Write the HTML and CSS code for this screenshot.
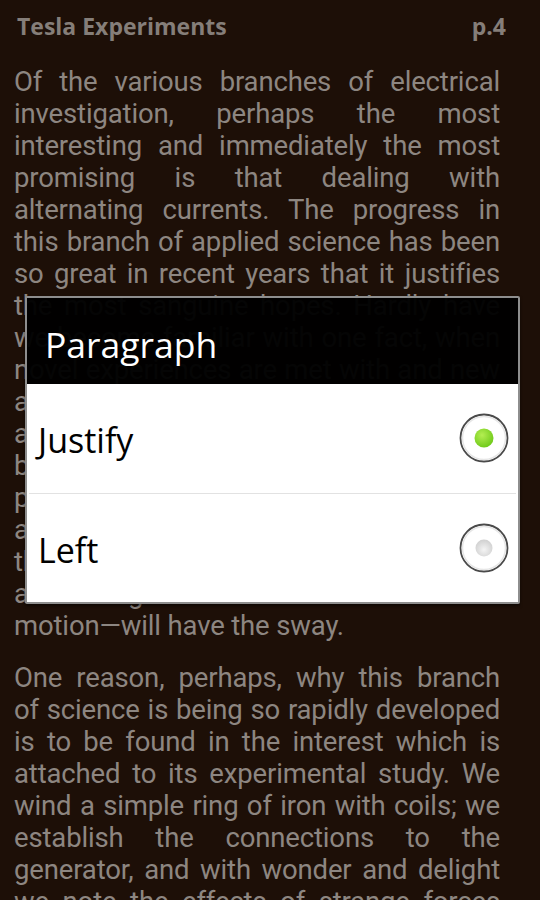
FILE: index.html
```html
<!DOCTYPE html>
<html>
<head>
<meta charset="utf-8">
<link rel="stylesheet" href="styles.css">
</head>
<body>
<div class="screen">
  <header class="bar">
    <span class="book">Tesla Experiments</span>
    <span class="page">p.4</span>
  </header>
  <main class="reader">
    <p class="para">
      <span class="ln">Of the various branches of electrical</span>
      <span class="ln">investigation, perhaps the most</span>
      <span class="ln">interesting and immediately the most</span>
      <span class="ln">promising is that dealing with</span>
      <span class="ln">alternating currents. The progress in</span>
      <span class="ln">this branch of applied science has been</span>
      <span class="ln">so great in recent years that it justifies</span>
      <span class="ln">the most sanguine hopes. Hardly have</span>
      <span class="ln">we become familiar with one fact, when</span>
      <span class="ln">novel experiences are met with and new</span>
      <span class="ln">avenues of research are opened. Even</span>
      <span class="ln">at this hour possibilities not dreamed of</span>
      <span class="ln">before are, by the use of these currents,</span>
      <span class="ln">partly realized. As in nature all is ebb</span>
      <span class="ln">and tide, all is wave motion, so it seems</span>
      <span class="ln">that in all branches of industry</span>
      <span class="ln">alternating currents—electric wave</span>
      <span class="ln last">motion—will have the sway.</span>
    </p>
    <p class="para">
      <span class="ln">One reason, perhaps, why this branch</span>
      <span class="ln">of science is being so rapidly developed</span>
      <span class="ln">is to be found in the interest which is</span>
      <span class="ln">attached to its experimental study. We</span>
      <span class="ln">wind a simple ring of iron with coils; we</span>
      <span class="ln">establish the connections to the</span>
      <span class="ln">generator, and with wonder and delight</span>
      <span class="ln">we note the effects of strange forces</span>
    </p>
  </main>

  <div class="dialog">
    <div class="dialog-title">Paragraph</div>
    <ul class="options">
      <li class="option">
        <span class="opt-label">Justify</span>
        <svg class="radio" width="50" height="50" viewBox="0 0 50 50">
          <defs>
            <radialGradient id="g1" cx="0.4" cy="0.35" r="0.7">
              <stop offset="0" stop-color="#b4ee52"/>
              <stop offset="1" stop-color="#6cc817"/>
            </radialGradient>
          </defs>
          <circle cx="25" cy="25" r="23.5" fill="#fff" stroke="#4a4a4a" stroke-width="1.8"/>
          <circle cx="25" cy="25" r="21.5" fill="none" stroke="#e6e6e6" stroke-width="1.5"/>
          <circle cx="25" cy="25" r="9.5" fill="url(#g1)"/>
        </svg>
      </li>
      <li class="option">
        <span class="opt-label">Left</span>
        <svg class="radio" width="50" height="50" viewBox="0 0 50 50">
          <defs>
            <radialGradient id="g2" cx="0.5" cy="0.6" r="0.6">
              <stop offset="0" stop-color="#f4f4f4"/>
              <stop offset="1" stop-color="#cfcfcf"/>
            </radialGradient>
          </defs>
          <circle cx="25" cy="25" r="23.5" fill="#fff" stroke="#4a4a4a" stroke-width="1.8"/>
          <circle cx="25" cy="25" r="21.5" fill="none" stroke="#e6e6e6" stroke-width="1.5"/>
          <circle cx="25" cy="25" r="8.5" fill="url(#g2)"/>
        </svg>
      </li>
    </ul>
  </div>
</div>
</body>
</html>
```

FILE: styles.css
```css
html, body {
  margin: 0;
  padding: 0;
  background: #1d0f07;
}

.screen {
  position: relative;
  width: 540px;
  height: 900px;
  overflow: hidden;
  background: #1d0f07;
}

.bar {
  display: flex;
  justify-content: space-between;
  align-items: baseline;
  padding: 11px 34px 0 17px;
  height: 56px;
  box-sizing: border-box;
  font-family: "Open Sans", "Noto Sans", sans-serif;
  font-weight: 700;
  font-size: 23px;
  line-height: 30px;
  color: #857e79;
}

.reader {
  padding: 10px 40px 0 14px;
  font-family: Roboto, "Noto Sans", sans-serif;
  font-size: 27.5px;
  line-height: 32px;
  letter-spacing: -0.15px;
  color: #8d8681;
}

.para {
  margin: 0 0 20px 0;
}

.ln {
  display: block;
  text-align: justify;
  text-align-last: justify;
}

.ln.last {
  text-align-last: left;
}

.dialog {
  position: absolute;
  left: 25px;
  top: 296px;
  width: 495px;
  height: 308px;
  box-sizing: border-box;
  border: 2px solid #8e8e8e;
  border-radius: 2px;
  display: flex;
  flex-direction: column;
  box-shadow: 0 2px 3px rgba(0,0,0,0.5);
}

.dialog-title {
  height: 86px;
  flex: none;
  box-sizing: border-box;
  background: rgba(0, 0, 0, 0.965);
  color: #fff;
  font-family: "Open Sans", "Noto Sans", sans-serif;
  font-size: 35.5px;
  line-height: 86px;
  padding-left: 18px;
  padding-top: 3px;
}

.options {
  list-style: none;
  margin: 0;
  padding: 0;
  flex: 1;
  display: flex;
  flex-direction: column;
  background: #fff;
}

.option {
  flex: 1;
  display: flex;
  align-items: center;
  justify-content: space-between;
  padding: 0 9px 0 11px;
  font-family: "Open Sans", "Noto Sans", sans-serif;
  font-size: 34px;
  color: #000;
}

.option + .option {
  border-top: 1px solid #e2e2e2;
  margin: 0 2px;
  padding: 0 7px 0 9px;
}

.opt-label {
  padding-top: 4px;
}

.radio {
  display: block;
}
```
